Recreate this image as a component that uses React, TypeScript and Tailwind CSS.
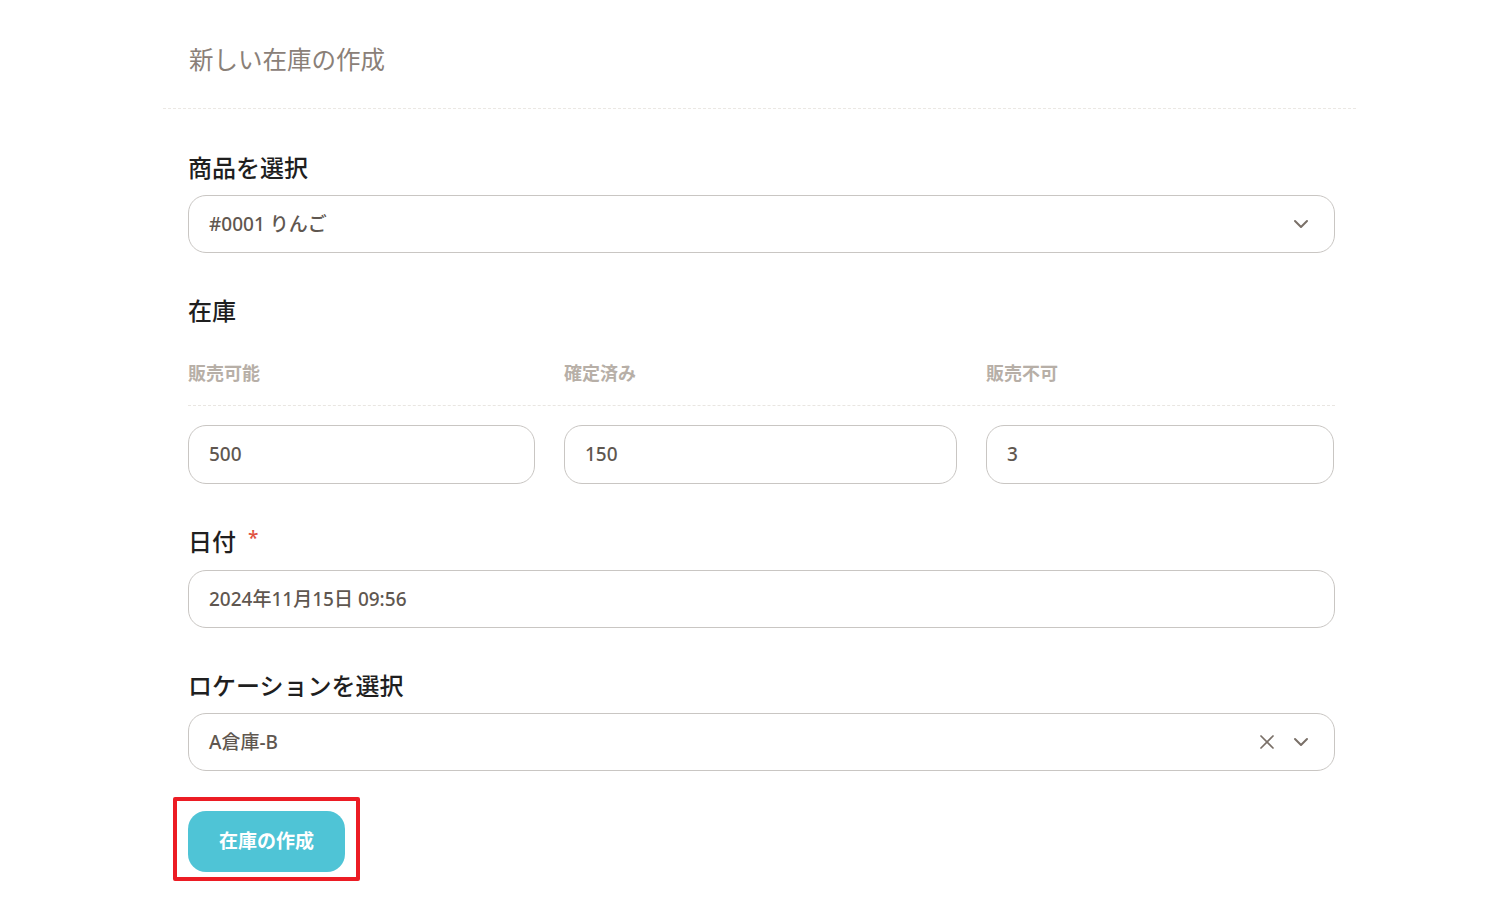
import React from "react";
import { ChevronDown, X } from "lucide-react";

const font = { fontFamily: '"Noto Sans", "Noto Sans CJK JP", sans-serif' };

function FieldLabel({ children, required }: { children: React.ReactNode; required?: boolean }) {
    return (
        <div className="flex items-center h-8 text-[24px] font-medium text-[#1f1f1f] leading-8">
            <span>{children}</span>
            {required && <span className="ml-3 text-[19px] text-[#e0523f] -mt-2">*</span>}
        </div>
    );
}

function Box({ children, className = "" }: { children: React.ReactNode; className?: string }) {
    return (
        <div className={"flex items-center border-[1.5px] border-[#c9c6c3] rounded-[18px] bg-white pl-5 pr-[21px] text-[19px] font-medium text-[#5f5750] " + className}>
            {children}
        </div>
    );
}

const stock = [
    { label: "販売可能", value: "500" },
    { label: "確定済み", value: "150" },
    { label: "販売不可", value: "3" },
];

export default function App() {
    return (
        <div className="min-h-[911px] bg-white" style={font}>
            <div className="ml-[163px] w-[1193px]">
                <div className="pt-[44px] pb-[32px] pl-[26px] border-b border-dashed border-[#ebe8e4]">
                    <h1 className="text-[24.5px] leading-8 text-[#8a8078]">新しい在庫の作成</h1>
                </div>

                <div className="ml-[25px] w-[1147px] flex flex-col">
                    <div className="mt-[43px]">
                        <FieldLabel>商品を選択</FieldLabel>
                    </div>
                    <Box className="mt-[11px] h-[58px] justify-between">
                        <span>#0001 りんご</span>
                        <ChevronDown className="w-6 h-6 text-[#7a7068]" strokeWidth={2} />
                    </Box>

                    <div className="mt-[42px]">
                        <FieldLabel>在庫</FieldLabel>
                    </div>
                    <div className="mt-[33px] grid grid-cols-[347px_393px_348px] gap-x-[29px] pb-[19px] border-b border-dashed border-[#e9e6e2]">
                        {stock.map((s) => (
                            <div key={s.label} className="h-[26px] leading-[26px] text-[18px] font-bold text-[#b7afa7]">
                                {s.label}
                            </div>
                        ))}
                    </div>
                    <div className="mt-[19px] grid grid-cols-[347px_393px_348px] gap-x-[29px]">
                        {stock.map((s) => (
                            <Box key={s.label} className="h-[59px]">
                                <span>{s.value}</span>
                            </Box>
                        ))}
                    </div>

                    <div className="mt-[42px]">
                        <FieldLabel required>日付</FieldLabel>
                    </div>
                    <Box className="mt-[12px] h-[58px]">
                        <span>2024年11月15日 09:56</span>
                    </Box>

                    <div className="mt-[42px]">
                        <FieldLabel>ロケーションを選択</FieldLabel>
                    </div>
                    <Box className="mt-[11px] h-[58px] justify-between">
                        <span>A倉庫-B</span>
                        <div className="flex items-center gap-[10px]">
                            <X className="w-6 h-6 text-[#7a7068]" strokeWidth={1.75} />
                            <ChevronDown className="w-6 h-6 text-[#7a7068]" strokeWidth={2} />
                        </div>
                    </Box>

                    <div className="mt-[40px]">
                        <button className="relative w-[157px] h-[61px] rounded-[18px] bg-[#4fc4d6] text-white text-[19px] font-bold">
                            在庫の作成
                            <span className="absolute left-[-15px] right-[-15px] top-[-14px] bottom-[-9px] border-4 border-[#ec1c24] rounded-[2px]" />
                        </button>
                    </div>
                </div>
            </div>
        </div>
    );
}
